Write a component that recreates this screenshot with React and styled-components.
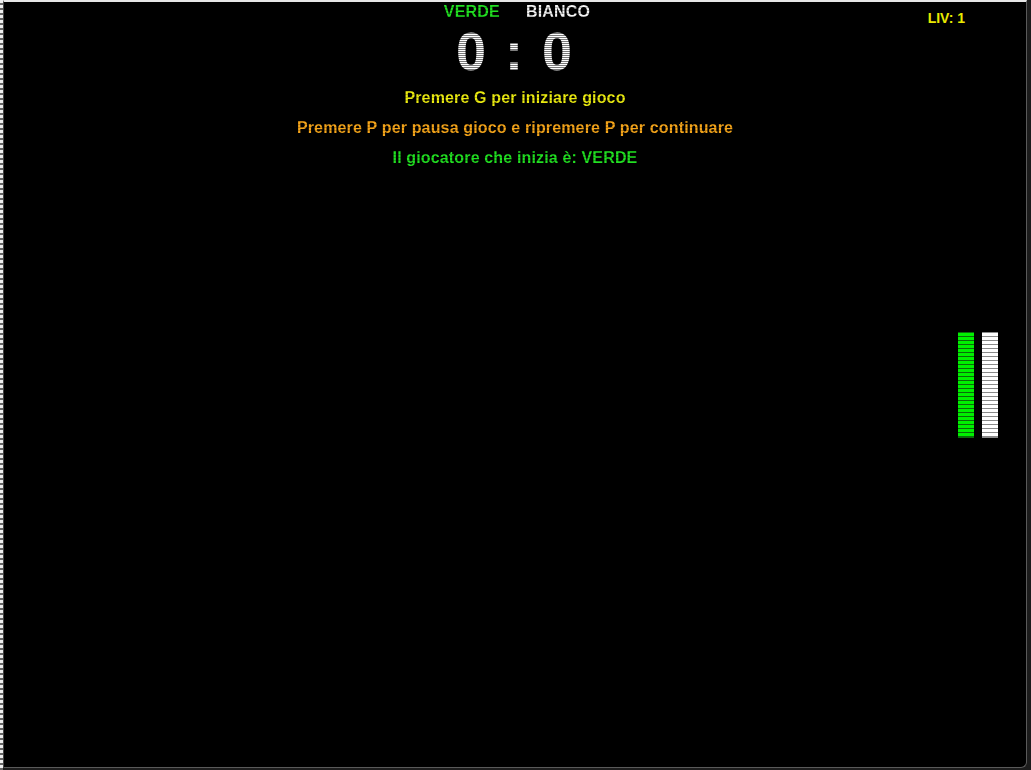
import styled, { createGlobalStyle, css } from "styled-components";

const GlobalStyle = createGlobalStyle`
  html, body {
    margin: 0;
    padding: 0;
    background: #1c1c1c;
    overflow: hidden;
  }
`;

// scanline look of the old game window
const scan = (color, dark, period = 2) => css`
  color: ${color};
  background: repeating-linear-gradient(
    to bottom,
    ${color} 0px,
    ${color} ${period - 1}px,
    ${dark} ${period - 1}px,
    ${dark} ${period}px
  );
  -webkit-background-clip: text;
  background-clip: text;
  -webkit-text-fill-color: transparent;
`;

const Desktop = styled.div`
  display: flex;
  width: 1031px;
  height: 770px;
  background: linear-gradient(to right, transparent 0 3px, #1c1c1c 3px),
    repeating-linear-gradient(to bottom, #eee 0 3px, #666 3px 5px);
`;

const Window = styled.div`
  position: relative;
  box-sizing: border-box;
  margin-left: 3px;
  width: 1024px;
  height: 768px;
  background: #000;
  border-top: 2px solid #e6e6e6;
  border-left: 1px solid #444;
  border-right: 1px solid #5a5a5a;
  border-bottom: 1px solid #5a5a5a;
  border-bottom-right-radius: 6px;
  font-family: "Liberation Sans", Arial, sans-serif;
  font-weight: bold;
  display: flex;
  flex-direction: column;
  align-items: center;
`;

const Teams = styled.div`
  display: flex;
  gap: 26px;
  padding-left: 4px;
  font-size: 16px;
  line-height: 20px;
`;

const Team = styled.span`
  letter-spacing: 0.2px;
  ${(p) => scan(p.$color, p.$dark, 3)}
`;

const Score = styled.div`
  margin-top: 2px;
  font-size: 54px;
  line-height: 54px;
  letter-spacing: 2px;
  white-space: pre;
  ${scan("#ffffff", "#7a7a7a", 2)}
`;

const Messages = styled.div`
  margin-top: 5px;
  display: flex;
  flex-direction: column;
  align-items: center;
`;

const Line = styled.div`
  font-size: 16px;
  line-height: 30px;
  letter-spacing: 0.15px;
  ${(p) => scan(p.$color, p.$dark, 3)}
`;

const Level = styled.div`
  position: absolute;
  top: 7px;
  right: 61px;
  font-size: 14px;
  line-height: 18px;
  color: #eaea00;
`;

const Bar = styled.div`
  position: absolute;
  top: 330px;
  left: ${(p) => p.$left}px;
  width: 16px;
  height: 105px;
  background: repeating-linear-gradient(
    to bottom,
    ${(p) => p.$edge} 0 1px,
    ${(p) => p.$color} 1px 4px
  );
  border-bottom: 1px solid ${(p) => p.$edge};
`;

export default function App() {
  return (
    <>
      <GlobalStyle />
      <Desktop>
        <Window>
          <Teams>
            <Team $color="#22e022" $dark="#16b016">VERDE</Team>
            <Team $color="#f4f4f4" $dark="#b8b8b8">BIANCO</Team>
          </Teams>
          <Score>0 : 0</Score>
          <Messages>
            <Line $color="#ecec10" $dark="#bcbc0c">Premere G per iniziare gioco</Line>
            <Line $color="#f5a51a" $dark="#c08012">
              Premere P per pausa gioco e ripremere P per continuare
            </Line>
            <Line $color="#22e022" $dark="#16b016">Il giocatore che inizia è: VERDE</Line>
          </Messages>
          <Level>LIV: 1</Level>
          <Bar $left={954} $color="#00f000" $edge="#0a6a0a" />
          <Bar $left={978} $color="#ffffff" $edge="#8a8a8a" />
        </Window>
      </Desktop>
    </>
  );
}
